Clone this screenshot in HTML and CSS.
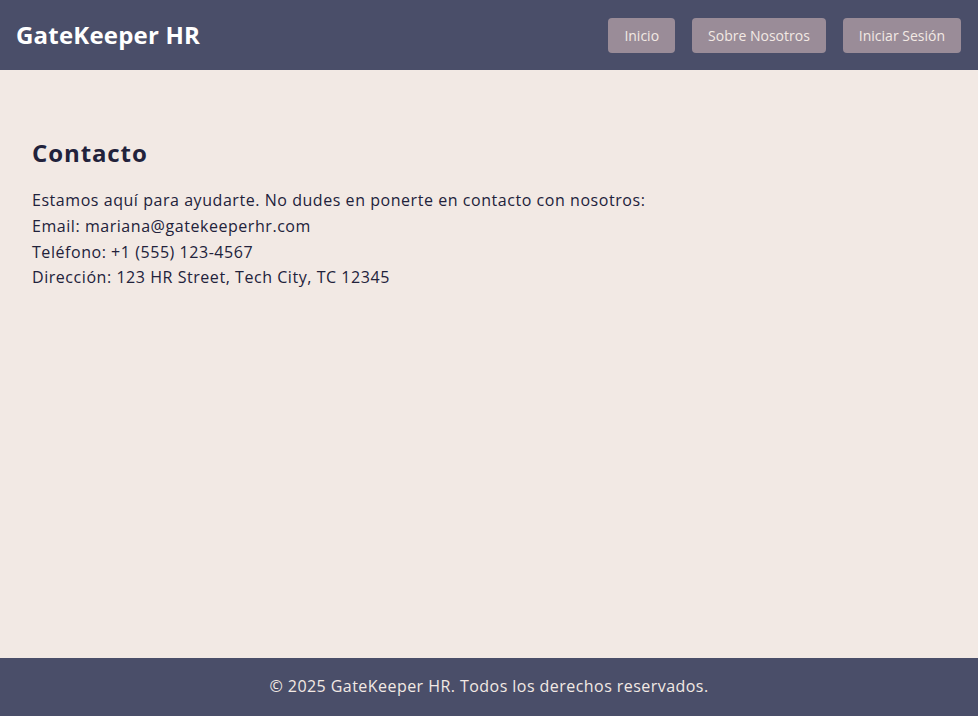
FILE: index.html
```html
<!DOCTYPE html>
<html lang="es">
<head>
<meta charset="utf-8">
<title>Contacto - GateKeeper HR</title>
<link rel="stylesheet" href="styles.css">
</head>
<body>
<header class="topbar">
  <div class="brand">GateKeeper HR</div>
  <nav class="nav">
    <a class="nav-btn" href="#">Inicio</a>
    <a class="nav-btn" href="#">Sobre Nosotros</a>
    <a class="nav-btn" href="#">Iniciar Sesión</a>
  </nav>
</header>
<main class="content">
  <h2 class="title">Contacto</h2>
  <p class="line">Estamos aquí para ayudarte. No dudes en ponerte en contacto con nosotros:</p>
  <p class="line">Email: mariana@gatekeeperhr.com</p>
  <p class="line">Teléfono: +1 (555) 123-4567</p>
  <p class="line">Dirección: 123 HR Street, Tech City, TC 12345</p>
</main>
<footer class="footer">
  <p class="line">© 2025 GateKeeper HR. Todos los derechos reservados.</p>
</footer>
</body>
</html>
```
FILE: styles.css
```css
html, body {
  margin: 0;
  padding: 0;
}
body {
  min-height: 100vh;
  display: flex;
  flex-direction: column;
  background: #f2e9e4;
  color: #22223b;
  font-family: "Open Sans", sans-serif;
  font-size: 16px;
  line-height: 1.6;
  letter-spacing: 0.55px;
}
.topbar {
  height: 70px;
  box-sizing: border-box;
  background: #4a4e69;
  display: flex;
  align-items: center;
  justify-content: space-between;
  padding: 0 17px 0 16px;
}
.brand {
  color: #ffffff;
  font-size: 24px;
  font-weight: 700;
  letter-spacing: 0.2px;
}
.nav {
  display: flex;
  gap: 17px;
}
.nav-btn {
  display: block;
  height: 35px;
  box-sizing: border-box;
  padding: 0 16px;
  line-height: 35px;
  background: #9a8c98;
  color: #f2e9e4;
  border-radius: 4px;
  font-size: 14px;
  letter-spacing: 0;
  text-decoration: none;
}
.content {
  flex: 1;
  padding: 64px 32px 0;
}
.title {
  margin: 0 0 16px;
  font-size: 24px;
  font-weight: 700;
  line-height: 1.6;
  letter-spacing: 0.9px;
  color: #22223b;
}
.line {
  margin: 0;
  color: #22223b;
}
.footer {
  background: #4a4e69;
  padding: 16px;
  text-align: center;
}
.footer .line {
  color: #f2e9e4;
  letter-spacing: 0.45px;
}
```
